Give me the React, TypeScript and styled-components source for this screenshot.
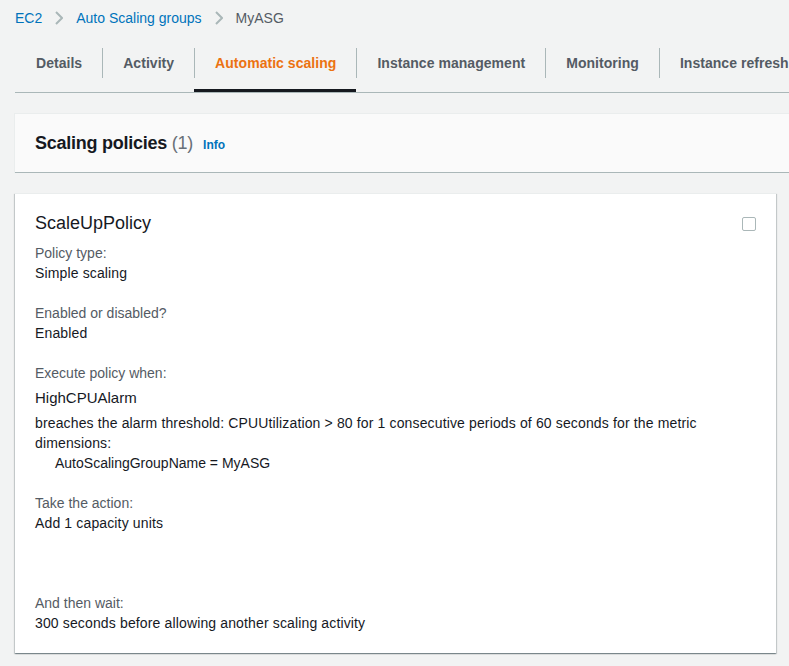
import styled, { createGlobalStyle } from "styled-components";

const GlobalStyle = createGlobalStyle`
  html, body {
    margin: 0;
    padding: 0;
    background: #f2f3f3;
    overflow: hidden;
  }
  body {
    font-family: "Liberation Sans", Arial, sans-serif;
    font-size: 14px;
    line-height: 20px;
    color: #16191f;
  }
`;

const tabs = [
  "Details",
  "Activity",
  "Automatic scaling",
  "Instance management",
  "Monitoring",
  "Instance refresh",
];

const Chevron = () => (
  <svg width="8" height="14" viewBox="0 0 8 14" fill="none">
    <path d="M1 1l6 6-6 6" stroke="#aab7b8" strokeWidth="2" />
  </svg>
);

const App = () => {
  return (
    <Page>
      <GlobalStyle />
      <Crumbs>
        <CrumbLink>EC2</CrumbLink>
        <Chevron />
        <CrumbLink>Auto Scaling groups</CrumbLink>
        <Chevron />
        <CrumbCurrent>MyASG</CrumbCurrent>
      </Crumbs>

      <TabBar>
        {tabs.map((t, i) => (
          <Tab key={t} $active={i === 2}>
            <TabLabel $first={i === 0} $active={i === 2}>
              {t}
            </TabLabel>
          </Tab>
        ))}
      </TabBar>

      <Header>
        <HeaderTitle>
          Scaling policies <Count>(1)</Count>
        </HeaderTitle>
        <InfoLink>Info</InfoLink>
      </Header>

      <Card>
        <CardTitleRow>
          <CardTitle>ScaleUpPolicy</CardTitle>
          <Checkbox />
        </CardTitleRow>

        <Fields>
          <Field>
            <Label>Policy type:</Label>
            <Value>Simple scaling</Value>
          </Field>
          <Field>
            <Label>Enabled or disabled?</Label>
            <Value>Enabled</Value>
          </Field>
          <Field>
            <Label>Execute policy when:</Label>
            <AlarmName>HighCPUAlarm</AlarmName>
            <Value>
              breaches the alarm threshold: CPUUtilization &gt; 80 for 1 consecutive
              periods of 60 seconds for the metric dimensions:
            </Value>
            <Indented>AutoScalingGroupName = MyASG</Indented>
          </Field>
          <Field>
            <Label>Take the action:</Label>
            <Value>Add 1 capacity units</Value>
          </Field>
          <Field $spaced>
            <Label>And then wait:</Label>
            <Value>300 seconds before allowing another scaling activity</Value>
          </Field>
        </Fields>
      </Card>
    </Page>
  );
};

export default App;

const Page = styled.div`
  padding: 8px 13px 40px 15px;
`;

const Crumbs = styled.div`
  display: flex;
  align-items: center;
  gap: 13px;
  height: 20px;
`;

const CrumbLink = styled.a`
  color: #0073bb;
  cursor: pointer;
`;

const CrumbCurrent = styled.span`
  color: #545b64;
`;

const TabBar = styled.div`
  display: flex;
  margin-top: 12px;
  margin-right: -40px;
  border-bottom: 1px solid #aab7b8;
  white-space: nowrap;
`;

const Tab = styled.div<{ $active?: boolean }>`
  padding: 8px 0 11px;
  border-bottom: 3px solid ${(p) => (p.$active ? "#16191f" : "transparent")};
  cursor: pointer;
`;

const TabLabel = styled.span<{ $first?: boolean; $active?: boolean }>`
  display: block;
  padding: 0 20px;
  line-height: 30px;
  font-weight: bold;
  letter-spacing: 0.04px;
  color: ${(p) => (p.$active ? "#ec7211" : "#545b64")};
  border-left: 1px solid ${(p) => (p.$first ? "transparent" : "#aab7b8")};
`;

const Header = styled.div`
  display: flex;
  align-items: center;
  height: 60px;
  margin-top: 20px;
  margin-right: -40px;
  padding: 0 20px;
  background: #fafafa;
  border-top: 1px solid #eaeded;
  border-bottom: 1px solid #aab7b8;
  box-shadow: -1px 0 0 0 #eaeded;
  box-sizing: border-box;
`;

const HeaderTitle = styled.h2`
  margin: 0;
  font-size: 18px;
  line-height: 22px;
  font-weight: bold;
  letter-spacing: -0.25px;
`;

const Count = styled.span`
  font-weight: normal;
  color: #687078;
`;

const InfoLink = styled.a`
  margin-left: 10px;
  margin-top: 3px;
  font-size: 12px;
  font-weight: bold;
  color: #0073bb;
  cursor: pointer;
`;

const Card = styled.div`
  margin-top: 20px;
  padding: 20px;
  background: #ffffff;
  border-top: 1px solid #eaeded;
  box-shadow: 0 1px 1px 0 rgba(0, 28, 36, 0.3),
    1px 1px 1px 0 rgba(0, 28, 36, 0.15), -1px 1px 1px 0 rgba(0, 28, 36, 0.15);
`;

const CardTitleRow = styled.div`
  display: flex;
  justify-content: space-between;
  align-items: flex-start;
`;

const CardTitle = styled.h3`
  margin: -1px 0 0;
  font-size: 18px;
  line-height: 20px;
  font-weight: normal;
  color: #16191f;
`;

const Checkbox = styled.span`
  display: block;
  width: 14px;
  height: 14px;
  margin-top: 3px;
  box-sizing: border-box;
  border: 1px solid #aab7b8;
  border-radius: 2px;
`;

const Fields = styled.div`
  display: flex;
  flex-direction: column;
  gap: 20px;
  margin-top: 10px;
`;

const Field = styled.div<{ $spaced?: boolean }>`
  margin-top: ${(p) => (p.$spaced ? "40px" : "0")};
`;

const Label = styled.div`
  color: #545b64;
`;

const Value = styled.div`
  color: #16191f;
  letter-spacing: 0.14px;
  padding-right: 50px;
`;

const AlarmName = styled.div`
  font-size: 15px;
  line-height: 22px;
  margin: 4px 0;
`;

const Indented = styled.div`
  padding-left: 20px;
`;
